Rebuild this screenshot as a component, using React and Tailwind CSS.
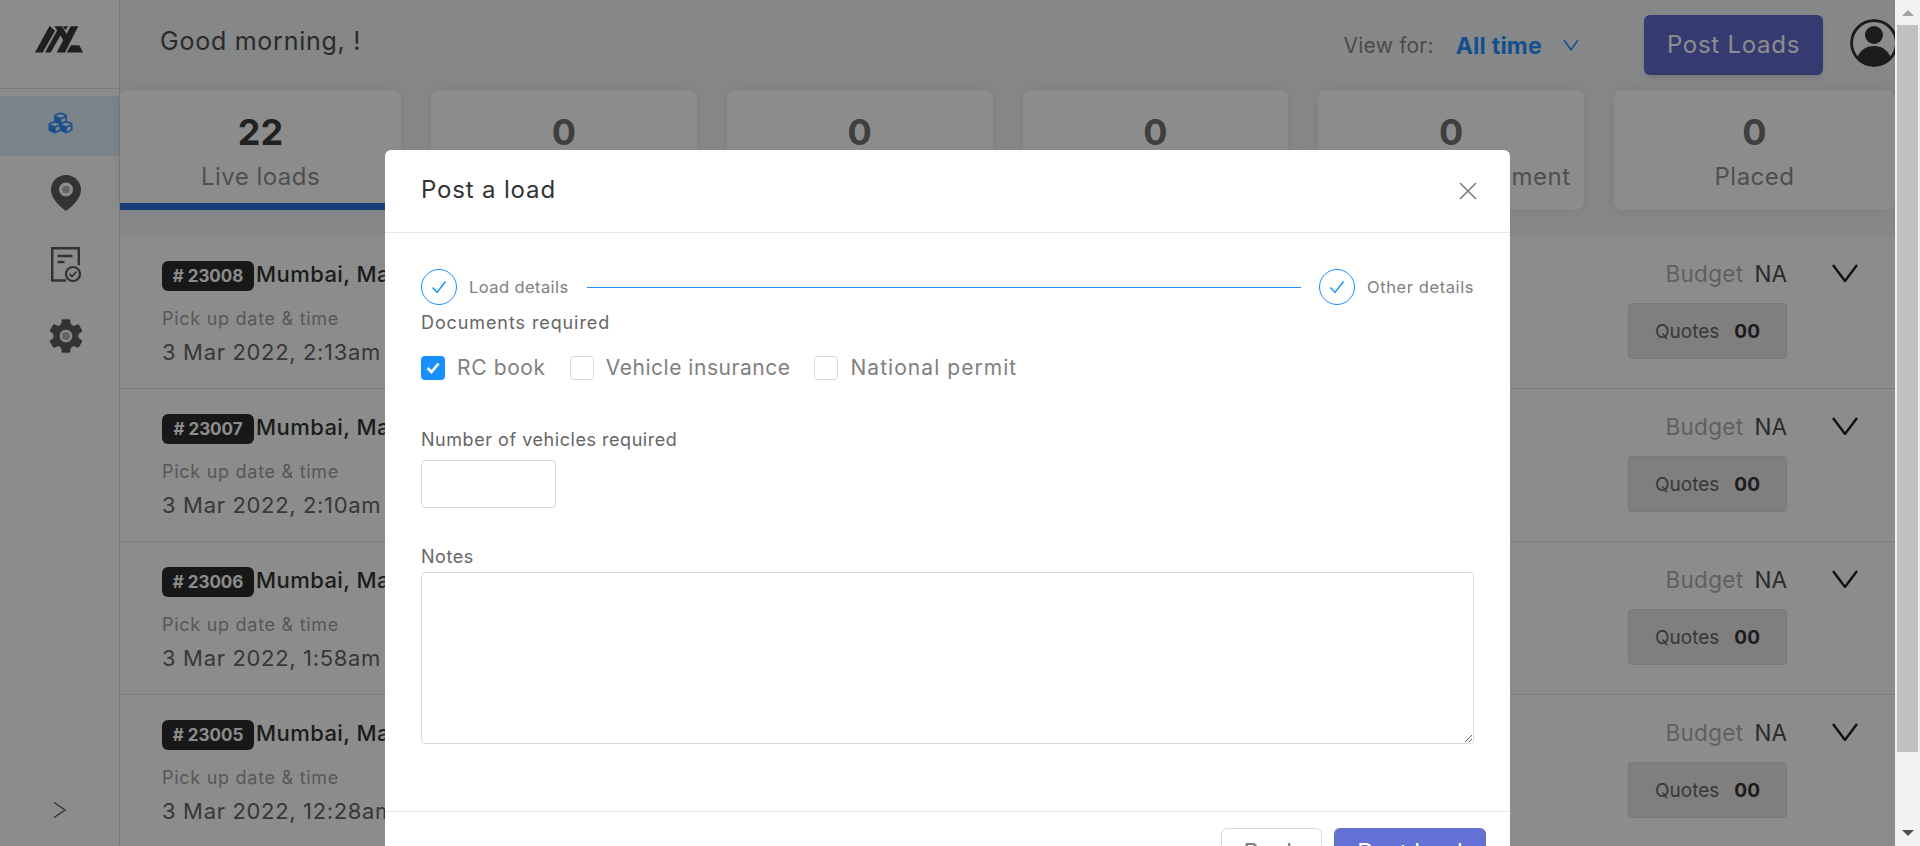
import React from "react";
import { FaCubes } from "react-icons/fa";
import { MdSettings } from "react-icons/md";

const FONT = "[font-family:Inter,'Liberation_Sans',sans-serif]";

const stats = [
  { value: "22", label: "Live loads", active: true },
  { value: "0" },
  { value: "0" },
  { value: "0" },
  { value: "0", label: "Pending assignment" },
  { value: "0", label: "Placed" },
];

const loads = [
  { id: "23008", date: "3 Mar 2022, 2:13am" },
  { id: "23007", date: "3 Mar 2022, 2:10am" },
  { id: "23006", date: "3 Mar 2022, 1:58am" },
  { id: "23005", date: "3 Mar 2022, 12:28am" },
];

const Logo = () => (
  <svg viewBox="105 78 144 80" className="w-12 h-[27px] text-[#3a3a3a]" fill="currentColor">
    <polygon points="105,157 128,157 165,92 150,78 148,78" />
    <polygon points="135,157 152,157 183,103 172,90" />
    <polygon points="163,78 186,78 206,112 195,128" />
    <polygon points="170,157 195,157 235,78 212,78" />
    <polygon points="200,157 249,157 238,135 213,135" />
    <polygon points="188,78 204,78 197,90" />
  </svg>
);

const PinIcon = () => (
  <svg viewBox="0 0 30 36" className="w-[30px] h-9 text-[#5d5d5d]">
    <path
      fill="currentColor"
      fillRule="evenodd"
      d="M15 0C6.7 0 0 6.6 0 14.8 0 23.5 8.6 31.5 15 36c6.4-4.5 15-12.5 15-21.2C30 6.6 23.3 0 15 0Zm0 7.5a7 7 0 1 1 0 14 7 7 0 0 1 0-14Z"
    />
    <circle cx="15" cy="14.5" r="3.8" fill="currentColor" fillOpacity="0.45" />
  </svg>
);

const DocIcon = () => (
  <svg viewBox="0 0 30 35" className="w-[30px] h-[35px] text-[#5d5d5d]" fill="none" stroke="currentColor">
    <path strokeWidth="2.5" d="M15 33.5H1.2V1.2h26.6v17" />
    <path strokeWidth="2.5" d="M6.5 9h15M6.5 15h7" />
    <circle cx="22" cy="27" r="7" strokeWidth="2.2" />
    <path strokeWidth="1.8" d="M18.5 27l2.5 2.5 4.5-5" />
  </svg>
);

const Avatar = () => (
  <svg viewBox="0 0 48 48" className="w-12 h-12 shrink-0 rounded-full text-[#333]">
    <defs>
      <clipPath id="avatar-clip">
        <circle cx="24" cy="24" r="22" />
      </clipPath>
    </defs>
    <circle cx="24" cy="24" r="22.5" fill="#fff" stroke="currentColor" strokeWidth="3" />
    <circle cx="24" cy="16" r="9" fill="currentColor" />
    <ellipse cx="24" cy="42" rx="17" ry="15" fill="currentColor" clipPath="url(#avatar-clip)" />
  </svg>
);

const Tick = ({ className }) => (
  <svg viewBox="0 0 16 14" className={className} fill="none" stroke="currentColor" strokeWidth="1.4">
    <path d="M1.5 7.5L6 12.5 14.5 1.5" />
  </svg>
);

const Step = ({ label, spacing }) => (
  <div className="flex items-center gap-[12px] shrink-0">
    <span className="w-9 h-9 rounded-full border border-[#1890ff] flex items-center justify-center text-[#1890ff]">
      <Tick className="w-4 h-[14px]" />
    </span>
    <span className={`text-[16.5px] text-[#808080] ${spacing}`}>{label}</span>
  </div>
);

const Check = ({ label, checked, spacing }) => (
  <label className="flex items-center gap-3">
    {checked ? (
      <span className="w-6 h-6 rounded bg-[#1890ff] flex items-center justify-center text-white">
        <svg viewBox="0 0 14 12" className="w-[14px] h-3" fill="none" stroke="currentColor" strokeWidth="2.6">
          <path d="M1.5 6L5.5 10 12.5 1.5" />
        </svg>
      </span>
    ) : (
      <span className="w-6 h-6 rounded border border-[#d9d9d9] bg-white" />
    )}
    <span className={`text-[21px] text-[#808080] leading-6 ${spacing}`}>{label}</span>
  </label>
);

const LoadRow = ({ id, date }) => (
  <div className="h-[153px] border-b border-[#e3e3e3] flex justify-between pl-[42px] pr-[37px] pt-[25px] shrink-0">
    <div>
      <div className="flex items-center gap-[2px]">
        <span className="w-[92px] h-[30px] rounded-md bg-[#2d2d2d] text-white text-[17px] font-bold flex items-center justify-center pt-[2px]">
          # {id}
        </span>
        <span className="text-[22px] font-medium text-[#333] tracking-[0.02em] whitespace-nowrap -mt-[4px]">Mumbai, Maharashtra</span>
      </div>
      <div className="mt-4 text-[18px] leading-6 text-[#a0a0a0] tracking-[0.04em] whitespace-nowrap">Pick up date &amp; time</div>
      <div className="mt-[9px] text-[22px] leading-6 text-[#666] tracking-[0.03em] whitespace-nowrap">{date}</div>
    </div>
    <div className="flex gap-[45px]">
      <div className="w-[159px]">
        <div className="flex justify-end gap-[11px] text-[22.5px] leading-7 -mt-px">
          <span className="text-[#b0b0b0] tracking-[0.015em]">Budget</span>
          <span className="text-[#4d4d4d]">NA</span>
        </div>
        <div className="mt-[15px] h-14 rounded border border-[#dcdcdc] bg-[#e8e8e8] flex items-center justify-center gap-[15px] text-[19px] pt-[3px]">
          <span className="text-[#666]">Quotes</span>
          <span className="font-bold text-[#333]">00</span>
        </div>
      </div>
      <svg viewBox="0 0 26 18" className="w-[26px] h-[18px] mt-[3px] text-[#1f1f1f]" fill="none" stroke="currentColor" strokeWidth="2.4">
        <path d="M1 1l12 16L25 1" />
      </svg>
    </div>
  </div>
);

const PostLoadModal = () => (
  <div className="absolute z-20 top-[150px] left-[385px] w-[1125px] bg-white rounded-md">
    <div className="h-[83px] border-b border-[#e8e8e8] pl-9 pr-[33px] flex items-center justify-between">
      <span className="text-[24px] text-[#333] tracking-[0.035em] -mt-[2px]">Post a load</span>
      <svg viewBox="0 0 18 18" className="w-[18px] h-[18px] text-[#7a7a7a] -mt-[1px]" fill="none" stroke="currentColor" strokeWidth="1.6">
        <path d="M1 1l16 16M17 1L1 17" />
      </svg>
    </div>
    <div className="px-9 pt-9">
      <div className="flex items-center gap-[18px]">
        <Step label="Load details" spacing="tracking-[0.025em]" />
        <div className="flex-1 h-px bg-[#1890ff]" />
        <Step label="Other details" spacing="tracking-[0.035em]" />
      </div>
      <div className="mt-[6px] text-[18px] leading-6 text-[#666] tracking-[0.05em]">Documents required</div>
      <div className="mt-[21px] flex gap-6">
        <Check label="RC book" checked spacing="tracking-[0.03em]" />
        <Check label="Vehicle insurance" spacing="tracking-[0.025em]" />
        <Check label="National permit" spacing="tracking-[0.05em]" />
      </div>
      <div className="mt-[48px] text-[18px] leading-6 text-[#666] tracking-[0.03em]">Number of vehicles required</div>
      <input className="mt-2 block w-[135px] h-12 rounded border border-[#d9d9d9] bg-white" />
      <div className="mt-[37px] text-[18px] leading-6 text-[#666] tracking-[0.03em]">Notes</div>
      <textarea className="mt-[3px] block w-full h-[172px] rounded-sm border border-[#d9d9d9] resize-y" />
    </div>
    <div className="mt-[67px] border-t border-[#e8e8e8] pt-4 pb-4 pr-6 flex justify-end gap-3">
      <button className="w-[101px] h-[50px] rounded-md border border-[#d9d9d9] bg-white text-[24px] text-[#808080]">Back</button>
      <button className="w-[152px] h-[50px] rounded-md bg-[#6370d5] text-[24px] text-white">Post load</button>
    </div>
  </div>
);

export default function App() {
  return (
    <div className={`flex h-screen overflow-hidden bg-[#f1f1f1] ${FONT}`}>
      <div className="relative w-[1895px] shrink-0 h-full overflow-hidden flex bg-white">
        {/* Sidebar */}
        <aside className="w-[120px] shrink-0 h-full border-r border-[#e0e0e0] bg-white flex flex-col">
          <div className="h-[89px] shrink-0 border-b border-[#dcdcdc] flex items-center justify-center pb-[10px] pr-[1px]">
            <Logo />
          </div>
          <div className="mt-[7px] h-[60px] bg-[#def0f9] flex items-center justify-center text-[#2f8fff] pb-[6px] pl-[2px]">
            <FaCubes className="w-[27px] h-[24px]" />
          </div>
          <div className="mt-[19px] flex justify-center pl-3"><PinIcon /></div>
          <div className="mt-[36px] flex justify-center pl-3"><DocIcon /></div>
          <div className="mt-[33px] flex justify-center pl-3 text-[#5d5d5d]">
            <div className="relative w-[42px] h-[42px]">
              <MdSettings className="w-[42px] h-[42px]" />
              <span className="absolute left-[17px] top-[17px] w-2 h-2 rounded-full bg-[#5d5d5d]/45" />
            </div>
          </div>
          <div className="mt-auto pb-[28px] pl-[53px]">
            <svg viewBox="0 0 13 16" className="w-[13px] h-4 text-[#666]" fill="none" stroke="currentColor" strokeWidth="1.4">
              <path d="M1 .5l11 7.5-11 7.5" />
            </svg>
          </div>
        </aside>

        <main className="flex-1 min-w-0 flex flex-col bg-[#f4f6f9]">
          {/* Top bar */}
          <header className="h-[90px] shrink-0 flex items-center pl-10">
            <h1 className="text-[25px] font-normal text-[#4d4d4d] tracking-[0.03em] self-start pt-[25px] leading-8">Good morning, !</h1>
            <div className="ml-auto flex items-center">
              <span className="text-[21px] text-[#888] tracking-[0.01em] pt-[2px]">View for:</span>
              <span className="ml-[22px] text-[23px] font-bold text-[#2190ff] tracking-[0.01em] pt-[2px]">All time</span>
              <svg viewBox="0 0 16 12" className="ml-[21px] w-4 h-3 text-[#2190ff]" fill="none" stroke="currentColor" strokeWidth="1.5">
                <path d="M1 1l7 10 7-10" />
              </svg>
              <button className="ml-[65px] w-[179px] h-[60px] rounded-md bg-[#626bcc] text-white text-[24px] tracking-[0.03em] shadow-md">Post Loads</button>
              <div className="ml-[27px] -mr-[3px] -mt-1"><Avatar /></div>
            </div>
          </header>

          {/* Stat tabs */}
          <div className="h-[120px] shrink-0 flex gap-[30px]">
            {stats.map((s, i) => (
              <div
                key={i}
                className={`bg-white shadow-[0_0_14px_rgba(0,0,0,0.08)] flex flex-col items-center pt-[18px] ${
                  s.active ? "rounded-t-lg border-b-[7px] border-[#2f6fd8] w-[281px]" : "rounded-lg flex-1"
                } ${i === stats.length - 1 ? "w-[281px] flex-none" : ""}`}
              >
                <span className={`text-[36px] leading-[48px] font-bold ${s.active ? "text-[#3d3d3d]" : "text-[#737373]"}`}>{s.value}</span>
                {s.label && <span className="mt-[5px] text-[24px] leading-8 text-[#919191] tracking-[0.02em] whitespace-nowrap">{s.label}</span>}
              </div>
            ))}
          </div>

          {/* Load list */}
          <div className="mt-[26px] flex-1 bg-white flex flex-col overflow-hidden">
            {loads.map((l) => (
              <LoadRow key={l.id} {...l} />
            ))}
          </div>
        </main>

        {/* Modal mask */}
        <div className="absolute inset-0 z-10 bg-black/45" />
        <PostLoadModal />
      </div>

      {/* Scrollbar */}
      <div className="flex-1 h-full flex flex-col items-center pl-[2px] pr-[2px]">
        <div className="h-[25px] shrink-0 flex items-center justify-center">
          <span className="w-0 h-0 border-x-[6px] border-x-transparent border-b-[6px] border-b-[#a3a3a3]" />
        </div>
        <div className="w-full h-[727px] shrink-0 bg-[#c1c1c1]" />
        <div className="mt-auto h-[26px] flex items-center justify-center">
          <span className="w-0 h-0 border-x-[6px] border-x-transparent border-t-[6px] border-t-[#505050]" />
        </div>
      </div>
    </div>
  );
}
